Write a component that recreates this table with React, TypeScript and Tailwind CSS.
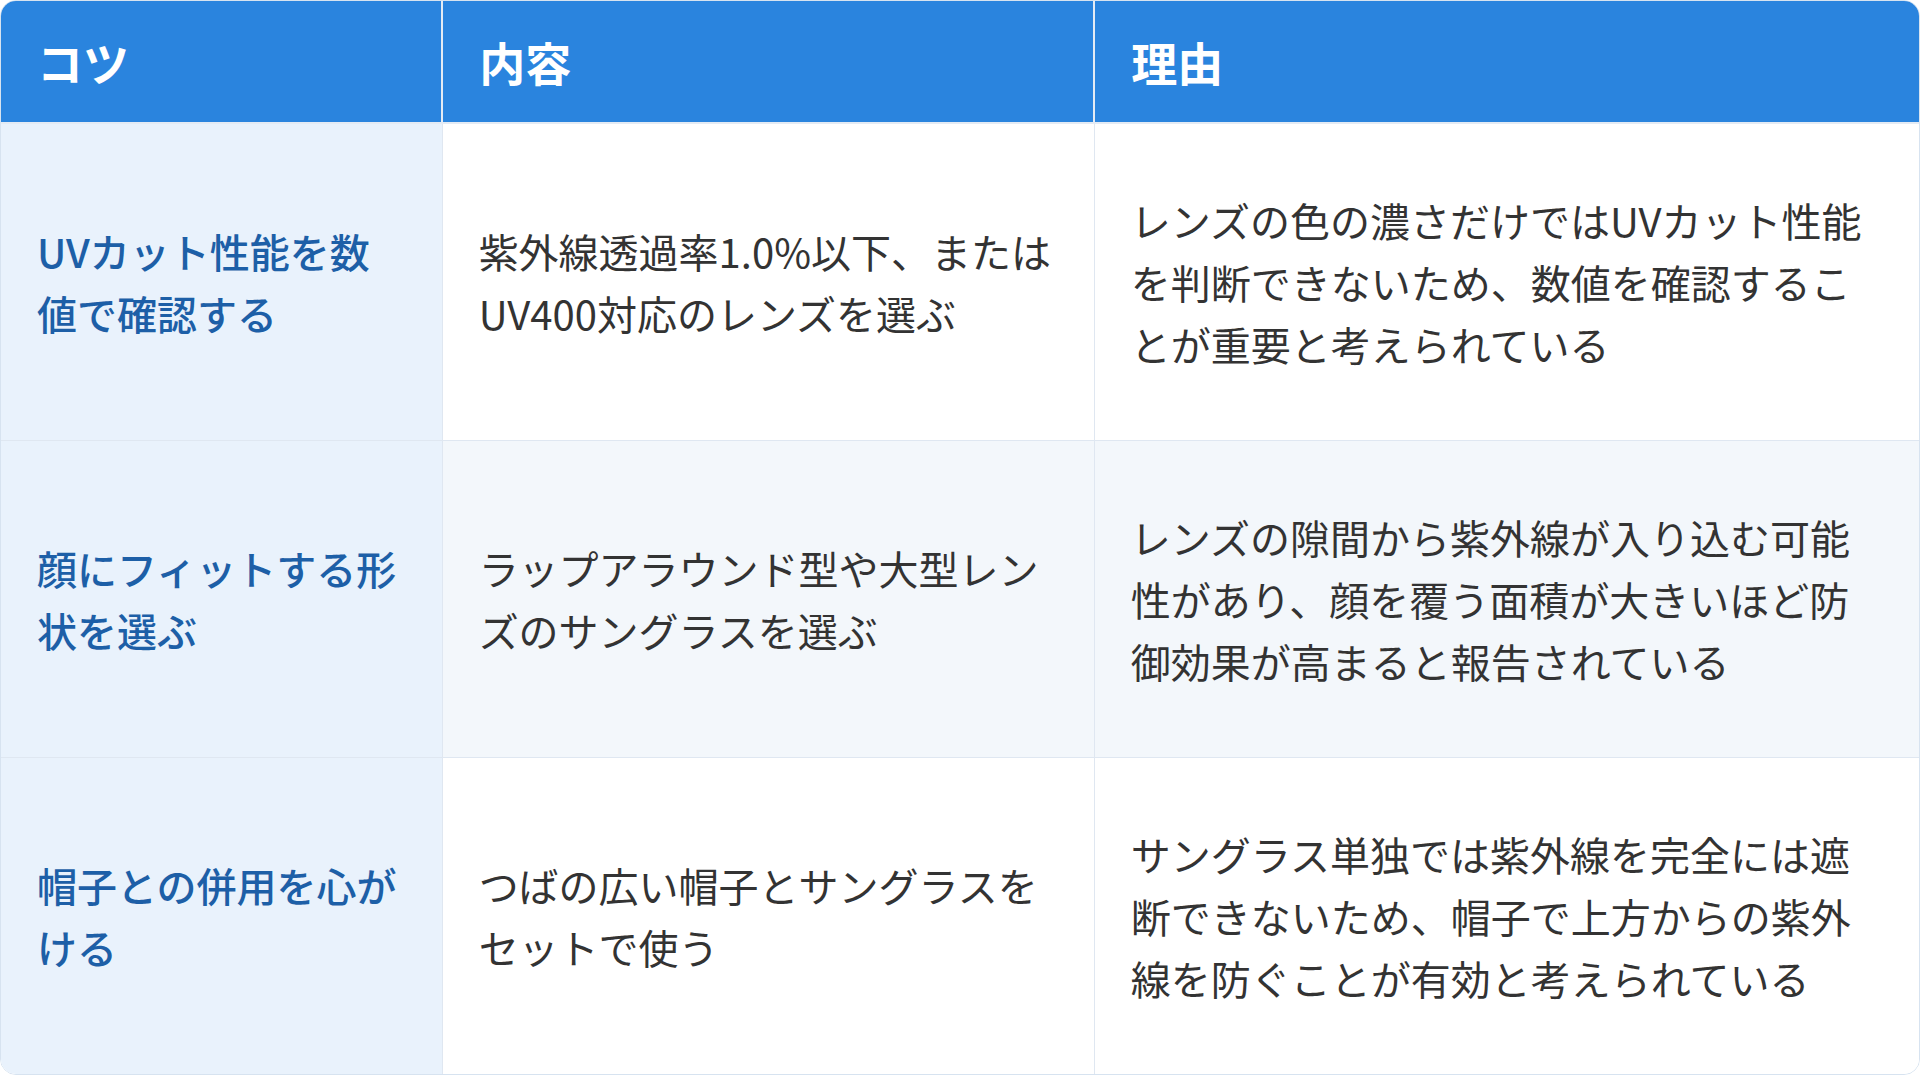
import React from 'react';

type Tip = {
  tip: string;
  detail: string;
  reason: string;
};

const tips: Tip[] = [
  {
    tip: 'UVカット性能を数値で確認する',
    detail: '紫外線透過率1.0%以下、またはUV400対応のレンズを選ぶ',
    reason: 'レンズの色の濃さだけではUVカット性能を判断できないため、数値を確認することが重要と考えられている',
  },
  {
    tip: '顔にフィットする形状を選ぶ',
    detail: 'ラップアラウンド型や大型レンズのサングラスを選ぶ',
    reason: 'レンズの隙間から紫外線が入り込む可能性があり、顔を覆う面積が大きいほど防御効果が高まると報告されている',
  },
  {
    tip: '帽子との併用を心がける',
    detail: 'つばの広い帽子とサングラスをセットで使う',
    reason: 'サングラス単独では紫外線を完全には遮断できないため、帽子で上方からの紫外線を防ぐことが有効と考えられている',
  },
];

const App: React.FC = () => {
  return (
    <div
      className="w-full bg-white"
      style={{ fontFamily: '"Noto Sans CJK JP", "Noto Sans", sans-serif' }}
    >
      <div className="overflow-hidden rounded-2xl border border-[#d7e3f0]">
        <table className="w-full table-fixed border-collapse">
          <colgroup>
            <col className="w-[23%]" />
            <col className="w-[34%]" />
            <col className="w-[43%]" />
          </colgroup>
          <thead>
            <tr className="bg-[#2a84de] text-white">
              <th className="border-r-2 border-b-2 border-[#e4ebf4] px-9 py-[28px] text-left text-[46px] font-bold leading-[65px]">
                コツ
              </th>
              <th className="border-r-2 border-b-2 border-[#e4ebf4] px-9 py-[28px] text-left text-[46px] font-bold leading-[65px]">
                内容
              </th>
              <th className="border-b-2 border-[#e4ebf4] px-9 py-[28px] text-left text-[46px] font-bold leading-[65px]">
                理由
              </th>
            </tr>
          </thead>
          <tbody>
            {tips.map((row, i) => {
              const last = i === tips.length - 1;
              return (
                <tr key={i} className={i % 2 === 1 ? 'bg-[#f3f7fb]' : 'bg-white'}>
                  {/* first column always tinted */}
                  <td className={`border-r border-[#dfe7f1] bg-[#e9f2fc] px-9 py-[65px] align-middle text-[40px] font-medium leading-[62px] text-[#1d5fa7] ${last ? '' : 'border-b'}`}>
                    {row.tip}
                  </td>
                  <td className={`border-r border-[#dfe7f1] px-9 py-[65px] align-middle text-[40px] leading-[62px] text-[#333] ${last ? '' : 'border-b'}`}>
                    {row.detail}
                  </td>
                  <td className={`border-[#dfe7f1] px-9 py-[65px] align-middle text-[40px] leading-[62px] text-[#333] ${last ? '' : 'border-b'}`}>
                    {row.reason}
                  </td>
                </tr>
              );
            })}
          </tbody>
        </table>
      </div>
    </div>
  );
};

export default App;
